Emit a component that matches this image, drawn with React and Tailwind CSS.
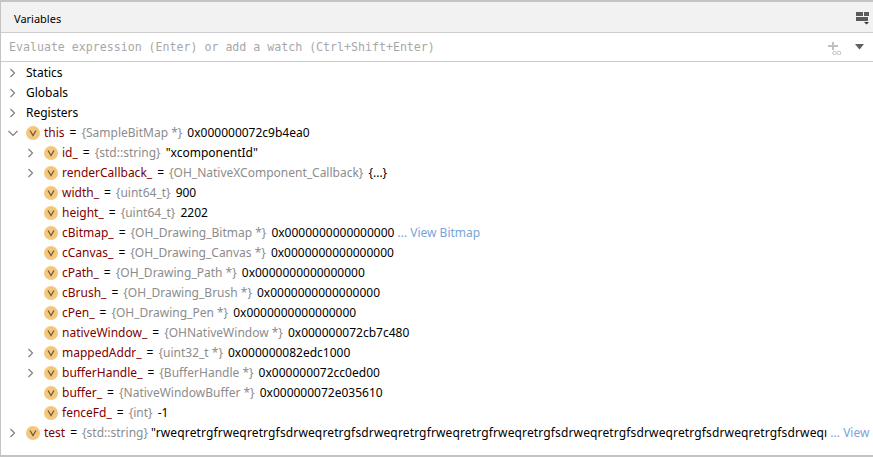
import React from "react";

const Chevron = ({ open }) => (
  <svg width="10" height="10" viewBox="0 0 10 10" fill="none" stroke="#808080" strokeWidth="1.2" className="shrink-0">
    {open ? <path d="M0.500 3l4.500 4.500 4.500-4.500" /> : <path d="M2.500 1l4 4-4 4" />}
  </svg>
);

const VarIcon = () => (
  <div className="w-[14px] h-[14px] rounded-full bg-[#f4c77f] shrink-0 flex items-center justify-center">
    <svg width="8" height="8" viewBox="0 0 8 8" fill="none" stroke="#6f5b36" strokeWidth="1.3">
      <path d="M1 1.500l3 5 3-5" />
    </svg>
  </div>
);

const Group = ({ name }) => (
  <div className="h-5 flex items-center pl-[7px]">
    <Chevron />
    <span className="ml-[8px] text-black">{name}</span>
  </div>
);

const Row = ({ name, type, value, more, depth = 1, arrow, open, wide }) => (
  <div className={depth === 1 ? "h-5 flex items-center pl-[25px] whitespace-nowrap" : "h-5 flex items-center pl-[7px] whitespace-nowrap"}>
    <div className="w-[10px] shrink-0">{arrow && <Chevron open={open} />}</div>
    <div className="ml-[8px] flex items-center">
      <VarIcon />
      <span className="ml-[4px] text-[#7f0000]">{name}</span>
      <span className="ml-[5px] text-black">=</span>
      <span className="ml-[5px] text-[#8c8c8c]">{type}</span>
      <span className={wide ? "ml-[3px] text-black tracking-[0.14px]" : "ml-[5px] text-black"}>{value}</span>
      {more && (
        <span className="ml-[3px] text-[#7aa5d8]">
          ... {more}
        </span>
      )}
    </div>
  </div>
);

const App = () => {
  return (
    <div className="w-[873px] h-[457px] bg-white border-t-2 border-l border-b-2 border-[#c4c4c4] text-[12px] overflow-hidden font-['Noto_Sans','Liberation_Sans',sans-serif]">
      <div className="h-[31px] bg-[#f2f2f2] border-b border-[#cdcdcd] flex items-center justify-between pl-[13px] pr-[3px]">
        <span className="text-black text-[11px] pt-[4px]">Variables</span>
        <svg width="14" height="14" viewBox="0 0 14 14" fill="#5a5a5a" className="mt-[3px]">
          <path d="M0 0h7v4H0zM8 0h5v4H8zM0 5h12v4H0z" />
          <path d="M8 10h5l-2.500 2.500z" fill="#333" />
        </svg>
      </div>
      <div className="h-[29px] border-b border-[#cdcdcd] flex items-center justify-between pl-[8px] pr-[9px]">
        <span className="font-['DejaVu_Sans_Mono',monospace] text-[#a8a8a8] text-[11.6px] pt-px">
          Evaluate expression (Enter) or add a watch (Ctrl+Shift+Enter)
        </span>
        <div className="flex items-center gap-[13px]">
          <svg width="18" height="16" viewBox="0 0 18 16" fill="none">
            <path d="M4 7h10M9 3v8" stroke="#c0c0c0" strokeWidth="2" />
            <circle cx="10.500" cy="14" r="1.800" stroke="#b5b5b5" strokeWidth="0.8" />
            <circle cx="15" cy="14" r="1.800" stroke="#b5b5b5" strokeWidth="0.8" />
          </svg>
          <svg width="9" height="6" viewBox="0 0 9 6" fill="#5f5f5f">
            <path d="M0 0h9L4.500 5.500z" />
          </svg>
        </div>
      </div>
      <div className="pt-px">
        <Group name="Statics" />
        <Group name="Globals" />
        <Group name="Registers" />
        <Row depth={0} arrow open name="this" type="{SampleBitMap *}" value="0x000000072c9b4ea0" />
        <Row arrow name="id_" type="{std::string}" value={'"xcomponentId"'} />
        <Row arrow name="renderCallback_" type="{OH_NativeXComponent_Callback}" value="{...}" />
        <Row name="width_" type="{uint64_t}" value="900" />
        <Row name="height_" type="{uint64_t}" value="2202" />
        <Row name="cBitmap_" type="{OH_Drawing_Bitmap *}" value="0x0000000000000000" more="View Bitmap" />
        <Row name="cCanvas_" type="{OH_Drawing_Canvas *}" value="0x0000000000000000" />
        <Row name="cPath_" type="{OH_Drawing_Path *}" value="0x0000000000000000" />
        <Row name="cBrush_" type="{OH_Drawing_Brush *}" value="0x0000000000000000" />
        <Row name="cPen_" type="{OH_Drawing_Pen *}" value="0x0000000000000000" />
        <Row name="nativeWindow_" type="{OHNativeWindow *}" value="0x000000072cb7c480" />
        <Row arrow name="mappedAddr_" type="{uint32_t *}" value="0x000000082edc1000" />
        <Row arrow name="bufferHandle_" type="{BufferHandle *}" value="0x000000072cc0ed00" />
        <Row name="buffer_" type="{NativeWindowBuffer *}" value="0x000000072e035610" />
        <Row name="fenceFd_" type="{int}" value="-1" />
        <Row
          depth={0}
          arrow
          wide
          name="test"
          type="{std::string}"
          value={'"rweqretrgfrweqretrgfsdrweqretrgfsdrweqretrgfrweqretrgfrweqretrgfsdrweqretrgfsdrweqretrgfsdrweqretrgfsdrweqı'}
          more="View"
        />
      </div>
    </div>
  );
};

export default App;
